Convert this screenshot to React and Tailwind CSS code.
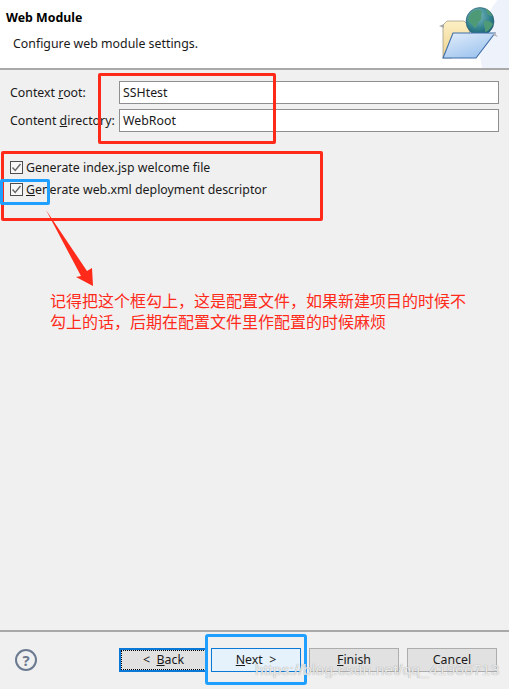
const font = { fontFamily: '"Noto Sans", "Noto Sans CJK SC", sans-serif' };

const WizardIcon = () => (
  <svg width="62" height="62" viewBox="0 0 62 62" className="absolute left-[438px] top-0">
    <defs>
      <radialGradient id="globe" cx="0.4" cy="0.3" r="0.8">
        <stop offset="0" stopColor="#7dbcc0" />
        <stop offset="0.6" stopColor="#2f7f8c" />
        <stop offset="1" stopColor="#17526a" />
      </radialGradient>
      <linearGradient id="front" x1="0" y1="0" x2="0.7" y2="1">
        <stop offset="0" stopColor="#e4eefb" />
        <stop offset="1" stopColor="#9cc3ee" />
      </linearGradient>
      <linearGradient id="back" x1="0" y1="0" x2="0" y2="1">
        <stop offset="0" stopColor="#fdf0c4" />
        <stop offset="1" stopColor="#eed28f" />
      </linearGradient>
    </defs>
    <path d="M5 58 L5 25 L9 21 L26 21 L30 25 L32 34 L14 58 Z" fill="url(#back)" stroke="#a3a08a" strokeWidth="0.8" />
    <path d="M1 26 L6 24 L6 28 Z" fill="#a8a8a8" />
    <circle cx="42" cy="21.5" r="14" fill="url(#globe)" stroke="#2d5c70" strokeWidth="0.6" />
    <path d="M33 13 C37 9 43 9 44 12 C42 15 45 17 42 21 C39 21 40 27 37 28 C35 25 31 23 30 19 C31 16 32 15 33 13 Z" fill="#4f9a76" />
    <path d="M46 21 C49 20 53 21 55 24 C53 28 50 32 47 32 C48 29 45 26 46 21 Z" fill="#4f9a76" />
    <path d="M48 9 C51 10 53 13 54 16 C51 16 48 13 48 9 Z" fill="#4f9a76" />
    <path d="M15 33 L57 33 L38 58 L5 58 Z" fill="url(#front)" stroke="#3f6ea8" strokeWidth="1.1" />
    <path d="M56 32 L60 37 L55 35 Z" fill="#b0b0b0" />
  </svg>
);

const Field = ({ label, mark, rest, value }) => (
  <div className="flex items-center h-[22px]">
    <label className="w-[119px] pl-[10px] pt-[2px] text-[12.35px] text-[#1a1a1a]">
      {label}<span className="underline">{mark}</span>{rest}
    </label>
    <div className="w-[380px] h-[23px] border border-[#8f8f8f] bg-white pl-[3px] text-[12.35px] leading-[21px] text-[#1a1a1a]">
      {value}
    </div>
  </div>
);

const Check = ({ first, mark, rest }) => (
  <div className="flex items-center h-[22px] pl-[10px]">
    <svg width="13" height="13" viewBox="0 0 13 13" className="mr-[3px] shrink-0">
      <rect x="0.5" y="0.5" width="12" height="12" fill="#f7f7f7" stroke="#4d4d4d" />
      <path d="M2.5 6.5 L5.2 9.5 L10.5 3" fill="none" stroke="#666666" strokeWidth="1.4" />
    </svg>
    <span className="pt-[2px] text-[12.35px] text-[#1a1a1a]">
      {first}<span className="underline">{mark}</span>{rest}
    </span>
  </div>
);

const Button = ({ mark, before, rest, className }) => (
  <div className={`h-[24px] flex items-center justify-center text-[12.35px] text-[#1a1a1a] ${className}`}>
    <span className="whitespace-pre">
      {before}<span className="underline">{mark}</span>{rest}
    </span>
  </div>
);

export default function App() {
  return (
    <div className="relative w-[509px] h-[689px] overflow-hidden flex flex-col bg-[#f0f0f0]" style={font}>
      {/* title area */}
      <div className="relative h-[70px] shrink-0 bg-white border-b-2 border-[#a9a9a9] overflow-hidden">
        <div className="absolute left-[480px] top-[-30px] w-[160px] h-[160px] rounded-full bg-[#eef2fb]" />
        <div className="pl-[6px] pt-[9px] text-[12.35px] font-bold leading-[18px] text-black">Web Module</div>
        <div className="pl-[13px] pt-[8px] text-[12.35px] leading-[18px] text-[#1a1a1a]">Configure web module settings.</div>
        <WizardIcon />
      </div>

      {/* form */}
      <div className="flex-1 flex flex-col pt-[11px]">
        <div className="flex flex-col gap-[6px]">
          <Field label="Context " mark="r" rest="oot:" value="SSHtest" />
          <Field label="Content " mark="d" rest="irectory:" value="WebRoot" />
        </div>
        <div className="flex flex-col mt-[25px]">
          <Check first="Generate index.jsp welcome file" mark="" rest="" />
          <Check first="" mark="G" rest="enerate web.xml deployment descriptor" />
        </div>
      </div>

      {/* footer */}
      <div className="h-[59px] shrink-0 border-t-2 border-[#a9a9a9] flex items-start pt-[16px]">
        <div className="ml-[15px] mr-[82px] mt-[1px] w-[22px] h-[22px] shrink-0 rounded-full border-2 border-[#6b7a90] flex items-center justify-center text-[15px] font-bold text-[#6b7a90]">?</div>
        <Button before="<  " mark="B" rest="ack" className="w-[89px] bg-[#e1e1e1] border-2 border-[#0a78d7] outline-1 -outline-offset-3 outline-dotted outline-black" />
        <Button mark="N" rest="ext  >" className="w-[90px] ml-[3px] bg-[#e5f1fb] border border-[#0a78d7]" />
        <Button mark="F" rest="inish" className="w-[90px] ml-[8px] bg-[#e1e1e1] border border-[#adadad]" />
        <Button mark="" rest="Cancel" className="w-[90px] ml-[8px] bg-[#e1e1e1] border border-[#adadad]" />
      </div>

      {/* screenshot annotations */}
      <div className="absolute left-[98px] top-[73px] w-[178px] h-[71px] border-[3px] border-[#ff2a1a] rounded-[2px]" />
      <div className="absolute left-[1px] top-[151px] w-[322px] h-[70px] border-[3px] border-[#ff2a1a] rounded-[2px]" />
      <div className="absolute left-0 top-[179px] w-[50px] h-[26px] border-[3px] border-[#1f9fff] rounded-[2px]" />
      <div className="absolute left-[205px] top-[634px] w-[102px] h-[51px] border-[3px] border-[#1f9fff] rounded-[3px]" />
      <svg width="60" height="85" viewBox="0 0 60 85" className="absolute left-[40px] top-[205px]">
        <path d="M6 5 L47 66 L52 63 L53 81 L36 72 L41 71 Z" fill="#ff2a1a" />
      </svg>
      <div className="absolute left-[50px] top-[291px] w-[430px] text-[16px] leading-[21px] text-[#ff2a1a]">
        <div>记得把这个框勾上，这是配置文件，如果新建项目的时候不</div>
        <div>勾上的话，后期在配置文件里作配置的时候麻烦</div>
      </div>
      <div className="absolute left-[255px] top-[661px] text-[15.5px] leading-[18px] tracking-[0.2px] text-[#f4f4f4]/90 [text-shadow:0_0_1px_#8c8c8c] font-['Liberation_Sans',sans-serif]">
        https://blog.csdn.net/qq_41966713
      </div>
    </div>
  );
}
